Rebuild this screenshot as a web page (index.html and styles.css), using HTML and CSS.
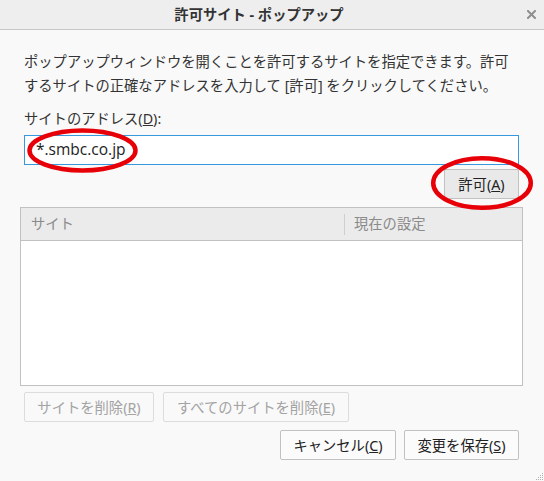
FILE: index.html
```html
<!DOCTYPE html>
<html lang="ja">
<head>
<meta charset="utf-8">
<title>許可サイト - ポップアップ</title>
<link rel="stylesheet" href="styles.css">
</head>
<body>
<div class="window">
  <header class="titlebar">
    <span class="title">許可サイト - ポップアップ</span>
    <span class="close">
      <svg width="9" height="9" viewBox="0 0 9 9"><path d="M1 1 L8 8 M8 1 L1 8" stroke="#8e8e8e" stroke-width="2" stroke-linecap="square"/></svg>
    </span>
  </header>
  <main class="content">
    <p class="desc">ポップアップウィンドウを開くことを許可するサイトを指定できます。許可するサイトの正確なアドレスを入力して [許可] をクリックしてください。</p>
    <div class="addr-label">サイトのアドレス(<u>D</u>):</div>
    <div class="input">*.smbc.co.jp</div>
    <div class="row-right allow-row">
      <button class="btn btn-allow">許可(<u>A</u>)</button>
    </div>
    <div class="table">
      <div class="thead">
        <div class="th th-site">サイト</div>
        <div class="th th-status"><span class="sep"></span>現在の設定</div>
      </div>
      <div class="tbody"></div>
    </div>
    <div class="row-left del-row">
      <button class="btn btn-disabled btn-del">サイトを削除(<u>R</u>)</button>
      <button class="btn btn-disabled btn-delall">すべてのサイトを削除(<u>E</u>)</button>
    </div>
    <div class="row-right footer-row">
      <button class="btn btn-light btn-cancel">キャンセル(<u>C</u>)</button>
      <button class="btn btn-light btn-save">変更を保存(<u>S</u>)</button>
    </div>
  </main>
  <svg class="annot" width="544" height="481" viewBox="0 0 544 481">
    <ellipse cx="82.5" cy="150.5" rx="53" ry="20" fill="none" stroke="#e80008" stroke-width="4.5"/>
    <ellipse cx="482" cy="183" rx="48.8" ry="24.8" fill="none" stroke="#e80008" stroke-width="4.5"/>
  </svg>
  <svg class="grip" width="10" height="10" viewBox="0 0 10 10">
    <g fill="#b0b0b0">
      <rect x="8" y="2" width="1" height="1"/>
      <rect x="6" y="4" width="1" height="1"/><rect x="8" y="4" width="1" height="1"/>
      <rect x="4" y="6" width="1" height="1"/><rect x="6" y="6" width="1" height="1"/><rect x="8" y="6" width="1" height="1"/>
      <rect x="2" y="8" width="1" height="1"/><rect x="4" y="8" width="1" height="1"/><rect x="6" y="8" width="1" height="1"/><rect x="8" y="8" width="1" height="1"/>
    </g>
  </svg>
</div>
</body>
</html>
```
FILE: styles.css
```css
* { box-sizing: border-box; }
html, body {
  margin: 0;
  padding: 0;
  background: #f9f9f9;
}
body {
  font-family: "Noto Sans", "Noto Sans CJK JP", sans-serif;
  font-size: 14.3px;
  color: #333;
}
.window {
  position: relative;
  width: 544px;
  height: 481px;
  background: #f9f9f9;
  overflow: hidden;
}
.titlebar {
  display: flex;
  align-items: center;
  height: 30px;
  background: #eeeeee;
  border-bottom: 1px solid #c6c6c6;
}
.title {
  flex: 1;
  text-align: center;
  font-weight: bold;
  color: #333;
  line-height: 29px;
}
.close {
  width: 26px;
  display: flex;
  justify-content: center;
  align-items: center;
  height: 29px;
}
.content {
  padding: 20px 25px 0 24px;
}
.desc {
  margin: 0;
  line-height: 24px;
  color: #333;
}
.addr-label {
  margin-top: 11px;
  line-height: 20px;
}
.input {
  margin-top: 6px;
  height: 30px;
  border: 1px solid #3798de;
  background: #fff;
  padding-left: 11px;
  font-family: "Open Sans", "Noto Sans CJK JP", sans-serif;
  font-size: 15.5px;
  line-height: 27px;
  color: #222;
}
.row-right {
  display: flex;
  justify-content: flex-end;
  gap: 8px;
}
.row-left {
  display: flex;
  gap: 9px;
}
.allow-row { margin-top: 4px; }
.btn {
  height: 30px;
  font-family: "Noto Sans", "Noto Sans CJK JP", sans-serif;
  font-size: 14.3px;
  color: #222;
  border: 1px solid #c1c1c1;
  border-radius: 2px;
  padding: 0;
  line-height: 27px;
  text-align: center;
}
.btn-allow {
  width: 75px;
  background: #e9e9e9;
}
.btn-light {
  background: #fbfbfb;
}
.btn-disabled {
  background: #f9f9f9;
  border-color: #dcdcdc;
  color: #a3a3a3;
}
.btn-del { width: 130px; }
.btn-delall { width: 186px; }
.btn-cancel { width: 116px; }
.btn-save { width: 115px; }
.table {
  margin: 8px -4px 0 -4px;
  border: 1px solid #c1c1c1;
}
.thead {
  display: grid;
  grid-template-columns: 323px 1fr;
  height: 33px;
  background: #ebebeb;
  border-bottom: 1px solid #c1c1c1;
  color: #8a8a8a;
}
.th {
  display: flex;
  align-items: center;
  line-height: 20px;
}
.th-site { padding-left: 10px; }
.th-status { padding-left: 0; }
.sep {
  display: inline-block;
  width: 1px;
  height: 21px;
  background: #cfcfcf;
  margin-right: 9px;
}
.tbody {
  height: 144px;
  background: #fff;
}
.del-row { margin-top: 6px; }
.footer-row { margin-top: 8px; }
.annot {
  position: absolute;
  left: 0;
  top: 0;
  pointer-events: none;
}
.grip {
  position: absolute;
  right: 0;
  bottom: 0;
}
```
